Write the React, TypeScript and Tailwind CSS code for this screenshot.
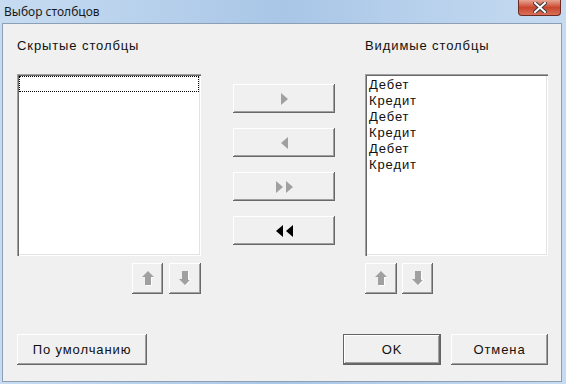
import React from "react";

const btn =
  "bg-[#f0f0f0] shadow-[inset_-1px_-1px_#696969,inset_1px_1px_#ffffff,inset_-2px_-2px_#a0a0a0,inset_2px_2px_#f0f0f0] flex items-center justify-center";

function Tri({ dir, color }: { dir: "l" | "r"; color: string }) {
  return (
    <svg width="7" height="12" viewBox="0 0 7 12">
      {dir === "r" ? (
        <polygon points="0,0 7,6 0,12" fill={color} />
      ) : (
        <polygon points="7,0 0,6 7,12" fill={color} />
      )}
    </svg>
  );
}

function UpArrow() {
  return (
    <svg width="12" height="15" viewBox="0 0 12 15">
      <polygon points="6,0 12,6 9,6 9,14 3,14 3,6 0,6" fill="#a0a0a0" />
      <polyline points="4,14.5 9.5,14.5 9.5,6.5 12,6.5" fill="none" stroke="#ffffff" strokeWidth="1" />
    </svg>
  );
}

function DownArrow() {
  return (
    <svg width="12" height="15" viewBox="0 0 12 15">
      <polygon points="3,0 9,0 9,8 12,8 6,14 0,8 3,8" fill="#a0a0a0" />
      <polyline points="9.5,0.5 9.5,8.5 12,8.5 6.5,14.5" fill="none" stroke="#ffffff" strokeWidth="1" />
    </svg>
  );
}

const listBox =
  "bg-white h-[182px] shadow-[inset_1px_1px_#a0a0a0,inset_2px_2px_#696969,inset_-1px_-1px_#ffffff,inset_-2px_-2px_#e3e3e3]";

export default function App() {
  const items = ["Дебет", "Кредит", "Дебет", "Кредит", "Дебет", "Кредит"];
  return (
    <div
      className="w-[566px] h-[384px] flex flex-col bg-gradient-to-r from-[#c7dcf1] via-[#a9c6e7] to-[#c6dbf1] overflow-hidden"
      style={{ fontFamily: '"Liberation Sans", Arial, sans-serif' }}
    >
      <div className="h-[23px] flex items-start justify-between shrink-0">
        <div
          className="pl-[4px] pt-[3px] text-[12px] text-[#1a1a1a]"
          style={{ fontFamily: '"Noto Sans", "Open Sans", sans-serif' }}
        >
          Выбор столбцов
        </div>
        <div className="mr-[5px] w-[43px] h-[16px] rounded-b-[4px] border border-t-0 border-[#6b2a22] bg-gradient-to-b from-[#e8a493] via-[#c9452c] to-[#d9705a] flex items-center justify-center">
          <svg width="14" height="11" viewBox="0 0 14 11">
            <path d="M2 1 L12 10 M12 1 L2 10" stroke="#3c3c3c" strokeWidth="4" strokeLinecap="square" />
            <path d="M2 1 L12 10 M12 1 L2 10" stroke="#ffffff" strokeWidth="2" strokeLinecap="square" />
          </svg>
        </div>
      </div>
      <div className="ml-[2px] mr-[4px] mb-[2px] flex-1 bg-[#f0f0f0] border border-[#8c9fb5] text-[13px] text-[#111111] flex flex-col pl-[14px] tracking-[0.9px]">
        <div className="flex pt-[14px]">
          <div className="w-[184px] flex flex-col">
            <div className="h-[16px] leading-[16px]">Скрытые столбцы</div>
            <div className={listBox + " mt-[20px] p-[2px]"}>
              <div className="h-[16px] border border-dotted border-black" />
            </div>
            <div className="flex justify-end gap-[6px] mt-[7px]">
              <div className={btn + " w-[31px] h-[31px]"}>
                <UpArrow />
              </div>
              <div className={btn + " w-[32px] h-[31px]"}>
                <DownArrow />
              </div>
            </div>
          </div>
          <div className="w-[102px] ml-[32px] flex flex-col gap-[15px] pt-[46px]">
            <div className={btn + " h-[29px]"}>
              <Tri dir="r" color="#a0a0a0" />
            </div>
            <div className={btn + " h-[29px]"}>
              <Tri dir="l" color="#a0a0a0" />
            </div>
            <div className={btn + " h-[29px] gap-[3px]"}>
              <Tri dir="r" color="#a0a0a0" />
              <Tri dir="r" color="#a0a0a0" />
            </div>
            <div className={btn + " h-[29px] gap-[3px]"}>
              <Tri dir="l" color="#000000" />
              <Tri dir="l" color="#000000" />
            </div>
          </div>
          <div className="w-[183px] ml-[30px] flex flex-col">
            <div className="h-[16px] leading-[16px]">Видимые столбцы</div>
            <div className={listBox + " mt-[20px] pt-[3px] pl-[4px]"}>
              {items.map((t, i) => (
                <div key={i} className="h-[16px] leading-[16px]">
                  {t}
                </div>
              ))}
            </div>
            <div className="flex gap-[5px] mt-[7px]">
              <div className={btn + " w-[32px] h-[31px]"}>
                <UpArrow />
              </div>
              <div className={btn + " w-[31px] h-[31px]"}>
                <DownArrow />
              </div>
            </div>
          </div>
        </div>
        <div className="flex mt-[40px] pr-[13px]">
          <div className={btn + " w-[130px] h-[31px]"}>По умолчанию</div>
          <div className="flex-1" />
          <div className="w-[98px] h-[31px] border border-[#646464] flex">
            <div className={btn + " flex-1"}>OK</div>
          </div>
          <div className={btn + " w-[97px] h-[31px] ml-[10px]"}>Отмена</div>
        </div>
      </div>
    </div>
  );
}
